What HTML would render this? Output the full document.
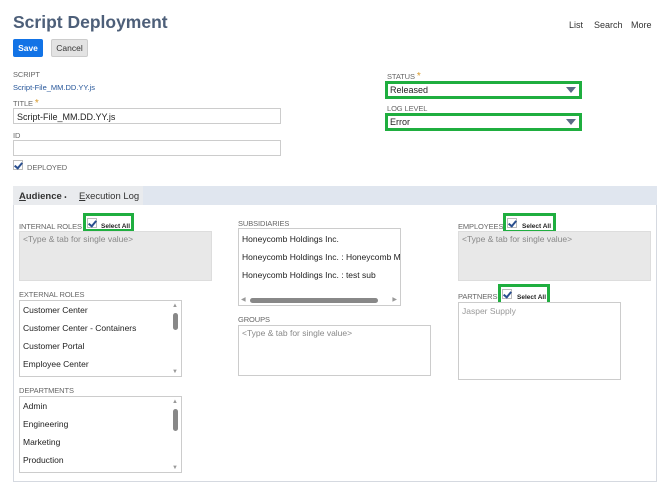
<!DOCTYPE html>
<html><head><meta charset="utf-8"><style>
*{box-sizing:border-box;margin:0;padding:0}
body{width:670px;height:483px;background:#fff;font-family:"Liberation Sans",sans-serif;position:relative;overflow:hidden;color:#222}
.a{position:absolute}
.lbl{position:absolute;font-size:7.5px;color:#666;letter-spacing:-0.1px}
.inp{position:absolute;border:1px solid #ccc;background:#fff;font-size:9px;padding:3px 3px;color:#222}
.gbox{position:absolute;border:3px solid #1fae3f}
.cb{position:absolute;width:10px;height:10px;border:1px solid #bbb;background:#fff}
.cb:after{content:"";position:absolute;left:2px;top:0px;width:3px;height:6px;border:solid #2a4f8f;border-width:0 2px 2px 0;transform:rotate(40deg)}
.sa{position:absolute;font-size:6.5px;font-weight:bold;color:#222}
.ta{position:absolute;background:#e8e8e8;border:1px solid #ddd;font-size:8.5px;color:#888;padding:2px 3px}
.list{position:absolute;border:1px solid #ccc;background:#fff;font-size:8.5px;color:#222}
.list div{position:absolute;left:3px}
.sb{position:absolute;right:3px;width:5px;background:#888;border-radius:3px}
.arr{position:absolute;right:3px;font-size:6px;color:#999}
.tri{position:absolute;width:0;height:0;border-left:5px solid transparent;border-right:5px solid transparent;border-top:6px solid #5a6a85}
</style></head><body>
<div class="a" style="left:13px;top:12px;font-size:17.5px;font-weight:bold;color:#4d5f79">Script Deployment</div>
<div class="a" style="left:569px;top:20px;font-size:9px;color:#333">List</div>
<div class="a" style="left:594px;top:20px;font-size:9px;color:#333">Search</div>
<div class="a" style="left:631px;top:20px;font-size:9px;color:#333">More</div>
<div class="a" style="left:13px;top:39px;width:30px;height:18px;background:#1273e6;border-radius:2px;color:#fff;font-size:8.5px;font-weight:bold;text-align:center;line-height:18px">Save</div>
<div class="a" style="left:51px;top:39px;width:37px;height:18px;background:#e3e3e3;border:1px solid #ccc;border-radius:2px;color:#333;font-size:8.5px;text-align:center;line-height:16px">Cancel</div>

<div class="lbl" style="left:13px;top:70px">SCRIPT</div>
<div class="a" style="left:13px;top:83px;font-size:7.5px;color:#255599">Script-File_MM.DD.YY.js</div>
<div class="lbl" style="left:13px;top:98px">TITLE <span style="color:#d99a2b;font-size:10px">*</span></div>
<div class="inp" style="left:13px;top:108px;width:268px;height:16px">Script-File_MM.DD.YY.js</div>
<div class="lbl" style="left:13px;top:131px">ID</div>
<div class="inp" style="left:13px;top:140px;width:268px;height:16px"></div>
<div class="cb" style="left:13px;top:160px"></div>
<div class="lbl" style="left:27px;top:163px">DEPLOYED</div>

<div class="lbl" style="left:387px;top:71px">STATUS <span style="color:#d99a2b;font-size:10px">*</span></div>
<div class="gbox" style="left:385px;top:81px;width:197px;height:18px"></div>
<div class="a" style="left:390px;top:85px;font-size:9px">Released</div>
<div class="tri" style="left:566px;top:87px"></div>
<div class="lbl" style="left:387px;top:104px">LOG LEVEL</div>
<div class="gbox" style="left:385px;top:113px;width:197px;height:18px"></div>
<div class="a" style="left:390px;top:117px;font-size:9px">Error</div>
<div class="tri" style="left:566px;top:119px"></div>

<div class="a" style="left:13px;top:186px;width:644px;height:296px;border:1px solid #d5d9e0"></div>
<div class="a" style="left:13px;top:186px;width:644px;height:19px;background:#e0e6ef"></div>
<div class="a" style="left:13px;top:186px;width:130px;height:19px;background:#e9ebee"></div>
<div class="a" style="left:19px;top:191px;font-size:9.5px;font-weight:bold;color:#333"><u>A</u>udience <span style="font-size:6px">•</span></div>
<div class="a" style="left:79px;top:191px;font-size:9.5px;color:#333"><u>E</u>xecution Log</div>

<div class="lbl" style="left:19px;top:222px">INTERNAL ROLES</div>
<div class="gbox" style="left:83px;top:213px;width:51px;height:19px"></div>
<div class="cb" style="left:87px;top:218px"></div>
<div class="sa" style="left:101px;top:223px">Select All</div>
<div class="ta" style="left:19px;top:231px;width:193px;height:50px">&lt;Type &amp; tab for single value&gt;</div>

<div class="lbl" style="left:19px;top:290px">EXTERNAL ROLES</div>
<div class="list" style="left:19px;top:300px;width:163px;height:77px">
<div style="top:4px">Customer Center</div><div style="top:22px">Customer Center - Containers</div><div style="top:40px">Customer Portal</div><div style="top:58px">Employee Center</div>
<span class="arr" style="top:2px">▲</span><span class="sb" style="top:12px;height:17px"></span><span class="arr" style="bottom:1px">▼</span></div>

<div class="lbl" style="left:19px;top:386px">DEPARTMENTS</div>
<div class="list" style="left:19px;top:396px;width:163px;height:77px">
<div style="top:4px">Admin</div><div style="top:22px">Engineering</div><div style="top:40px">Marketing</div><div style="top:58px">Production</div>
<span class="arr" style="top:2px">▲</span><span class="sb" style="top:12px;height:22px"></span><span class="arr" style="bottom:1px">▼</span></div>

<div class="lbl" style="left:238px;top:219px">SUBSIDIARIES</div>
<div class="list" style="left:238px;top:228px;width:163px;height:78px;overflow:hidden">
<div style="top:5px;white-space:nowrap">Honeycomb Holdings Inc.</div><div style="top:23px;white-space:nowrap">Honeycomb Holdings Inc. : Honeycomb M</div><div style="top:41px;white-space:nowrap">Honeycomb Holdings Inc. : test sub</div>
<span class="a" style="left:11px;top:69px;width:128px;height:5px;background:#888;border-radius:3px"></span>
<span class="a" style="left:2px;top:67px;font-size:6px;color:#999">◀</span><span class="a" style="right:3px;top:67px;font-size:6px;color:#999">▶</span></div>

<div class="lbl" style="left:238px;top:315px">GROUPS</div>
<div class="list" style="left:238px;top:325px;width:193px;height:51px;color:#888;padding:2px 3px">&lt;Type &amp; tab for single value&gt;</div>

<div class="lbl" style="left:458px;top:222px">EMPLOYEES</div>
<div class="gbox" style="left:503px;top:213px;width:53px;height:20px"></div>
<div class="cb" style="left:507px;top:218px"></div>
<div class="sa" style="left:522px;top:223px">Select All</div>
<div class="ta" style="left:458px;top:231px;width:193px;height:50px">&lt;Type &amp; tab for single value&gt;</div>

<div class="lbl" style="left:458px;top:292px">PARTNERS</div>
<div class="gbox" style="left:498px;top:284px;width:52px;height:21px"></div>
<div class="cb" style="left:502px;top:289px"></div>
<div class="sa" style="left:517px;top:294px">Select All</div>
<div class="list" style="left:458px;top:302px;width:163px;height:78px;color:#999;padding:3px 3px">Jasper Supply</div>
</body></html>
